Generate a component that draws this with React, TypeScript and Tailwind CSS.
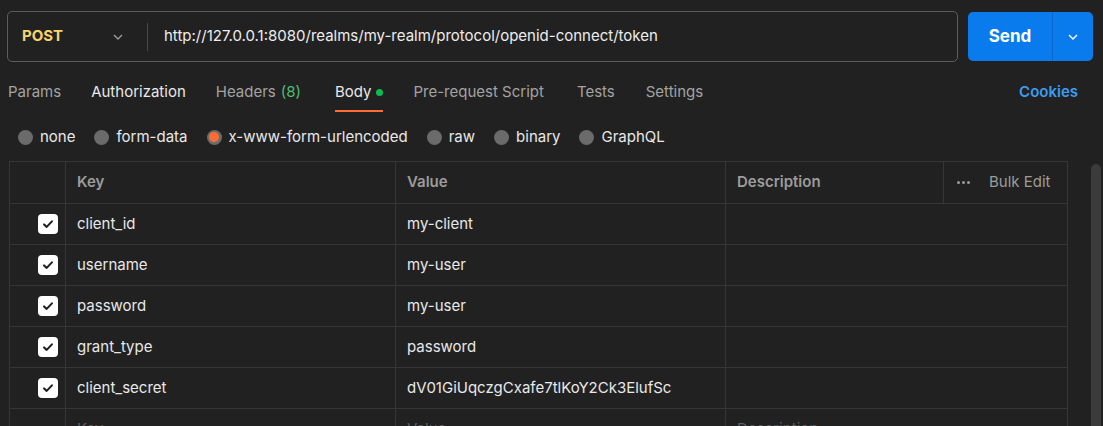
import React from "react";

const rows = [
  { key: "client_id", value: "my-client" },
  { key: "username", value: "my-user" },
  { key: "password", value: "my-user" },
  { key: "grant_type", value: "password" },
  { key: "client_secret", value: "dV01GiUqczgCxafe7tlKoY2Ck3ElufSc" },
];

const tabs: { label: string; tone: "dim" | "bright"; gap: string; extra?: React.ReactNode; active?: boolean }[] = [
  { label: "Params", tone: "dim", gap: "mr-[30px]" },
  { label: "Authorization", tone: "bright", gap: "mr-[30px]" },
  { label: "Headers", tone: "dim", gap: "mr-[34px]", extra: <span className="text-[#4bbf73]">(8)</span> },
  { label: "Body", tone: "bright", gap: "mr-[30px]", active: true },
  { label: "Pre-request Script", tone: "dim", gap: "mr-[33px]" },
  { label: "Tests", tone: "dim", gap: "mr-[31px]" },
  { label: "Settings", tone: "dim", gap: "" },
];

const bodyTypes = ["none", "form-data", "x-www-form-urlencoded", "raw", "binary", "GraphQL"];

function Chevron({ className }: { className?: string }) {
  return (
    <svg viewBox="0 0 16 16" fill="none" stroke="currentColor" strokeWidth="1.4" className={className}>
      <path d="M4 6l4 4 4-4" />
    </svg>
  );
}

function Checkbox() {
  return (
    <span className="flex h-[20px] w-[20px] items-center justify-center rounded-[4px] bg-white">
      <svg viewBox="0 0 16 16" className="h-[14px] w-[14px]" fill="none" stroke="#212121" strokeWidth="2.4" strokeLinecap="round" strokeLinejoin="round">
        <path d="M3.5 8.5l3 2.8 6-6.3" />
      </svg>
    </span>
  );
}

export default function App() {
  return (
    <div
      className="relative h-[426px] w-[1103px] overflow-hidden bg-[#212121] text-[15px] text-[#e8e8e8]"
      style={{ fontFamily: "Inter, 'Noto Sans', sans-serif" }}
    >
      {/* request line */}
      <div className="flex items-center gap-[10px] pl-[7px] pt-[11px]">
        <div className="flex h-[51px] w-[951px] items-center rounded-[5px] border border-[#5c5c5c]">
          <div className="flex w-[139px] items-center pl-[14px]">
            <span className="w-[88px] text-[15px] font-bold text-[#f6d36c]">POST</span>
            <Chevron className="h-[16px] w-[16px] text-[#9a9a9a]" />
          </div>
          <div className="h-[28px] w-px bg-[#4a4a4a]" />
          <span className="pl-[16px] text-[15px] text-[#ededed]">
            http://127.0.0.1:8080/realms/my-realm/protocol/openid-connect/token
          </span>
        </div>
        <div className="flex h-[49px] w-[125px] overflow-hidden rounded-[5px] bg-[#097bed]">
          <div className="flex w-[84px] items-center justify-center text-[17px] font-bold text-white">Send</div>
          <div className="w-px bg-[#0868cc]" />
          <div className="flex flex-1 items-center justify-center text-white">
            <Chevron className="h-[16px] w-[16px]" />
          </div>
        </div>
      </div>

      {/* tabs */}
      <div className="mt-[11px] flex h-[39px] items-stretch pl-[8px] pr-[25px]">
        {tabs.map((t) => (
          <div
            key={t.label}
            className={`relative flex items-center gap-[5px] ${t.gap} ${
              t.tone === "bright" ? "text-[#e8e8e8]" : "text-[#a3a3a3]"
            }`}
          >
            <span>{t.label}</span>
            {t.extra}
            {t.active ? <span className="h-[7px] w-[7px] rounded-full bg-[#0cbb52]" /> : null}
            {t.active ? <span className="absolute bottom-0 left-0 right-0 h-[2px] bg-[#ff6c37]" /> : null}
          </div>
        ))}
        <div className="ml-auto flex items-center font-semibold text-[#3d9cf0]">Cookies</div>
      </div>

      {/* body types */}
      <div className="flex h-[49px] items-center pl-[18px] pt-[1px]">
        {bodyTypes.map((b) => (
          <div key={b} className="mr-[19px] flex items-center gap-[7px]">
            {b === "x-www-form-urlencoded" ? (
              <span className="flex h-[15px] w-[15px] items-center justify-center rounded-full bg-[#6b6b6b]">
                <span className="h-[10px] w-[10px] rounded-full bg-[#ff6c37]" />
              </span>
            ) : (
              <span className="h-[15px] w-[15px] rounded-full bg-[#6b6b6b]" />
            )}
            <span className="text-[#e8e8e8]">{b}</span>
          </div>
        ))}
      </div>

      {/* table + scrollbar */}
      <div className="flex">
        <div className="ml-[9px] w-[1059px] border-l border-r border-t border-[#363636]">
          <div className="flex h-[42px] border-b border-[#363636] font-semibold text-[#9c9c9c]">
            <div className="w-[56px] border-r border-[#363636]" />
            <div className="flex w-[330px] items-center border-r border-[#363636] pl-[11px]">Key</div>
            <div className="flex w-[330px] items-center border-r border-[#363636] pl-[11px]">Value</div>
            <div className="flex w-[218px] items-center border-r border-[#363636] pl-[11px]">Description</div>
            <div className="flex flex-1 items-center pl-[13px] font-normal">
              <span className="mr-[19px] flex gap-[2px]">
                <span className="h-[3px] w-[3px] rounded-full bg-[#9c9c9c]" />
                <span className="h-[3px] w-[3px] rounded-full bg-[#9c9c9c]" />
                <span className="h-[3px] w-[3px] rounded-full bg-[#9c9c9c]" />
              </span>
              Bulk Edit
            </div>
          </div>
          {rows.map((r) => (
            <div key={r.key} className="flex h-[41px] border-b border-[#363636]">
              <div className="flex w-[56px] items-center justify-end border-r border-[#363636] pr-[7px]">
                <Checkbox />
              </div>
              <div className="flex w-[330px] items-center border-r border-[#363636] pl-[11px]">{r.key}</div>
              <div className="flex w-[330px] items-center border-r border-[#363636] pl-[11px]">{r.value}</div>
              <div className="w-[218px]" />
              <div className="flex-1" />
            </div>
          ))}
          <div className="flex h-[41px] text-[#5e5e5e]">
            <div className="w-[56px] border-r border-[#363636]" />
            <div className="flex w-[330px] items-center border-r border-[#363636] pl-[11px]">Key</div>
            <div className="flex w-[330px] items-center border-r border-[#363636] pl-[11px]">Value</div>
            <div className="flex w-[218px] items-center pl-[11px]">Description</div>
          </div>
        </div>
        <div className="ml-[23px] mt-[3px] h-[300px] w-[10px] rounded-full bg-[#3b3b3b]" />
      </div>
    </div>
  );
}
